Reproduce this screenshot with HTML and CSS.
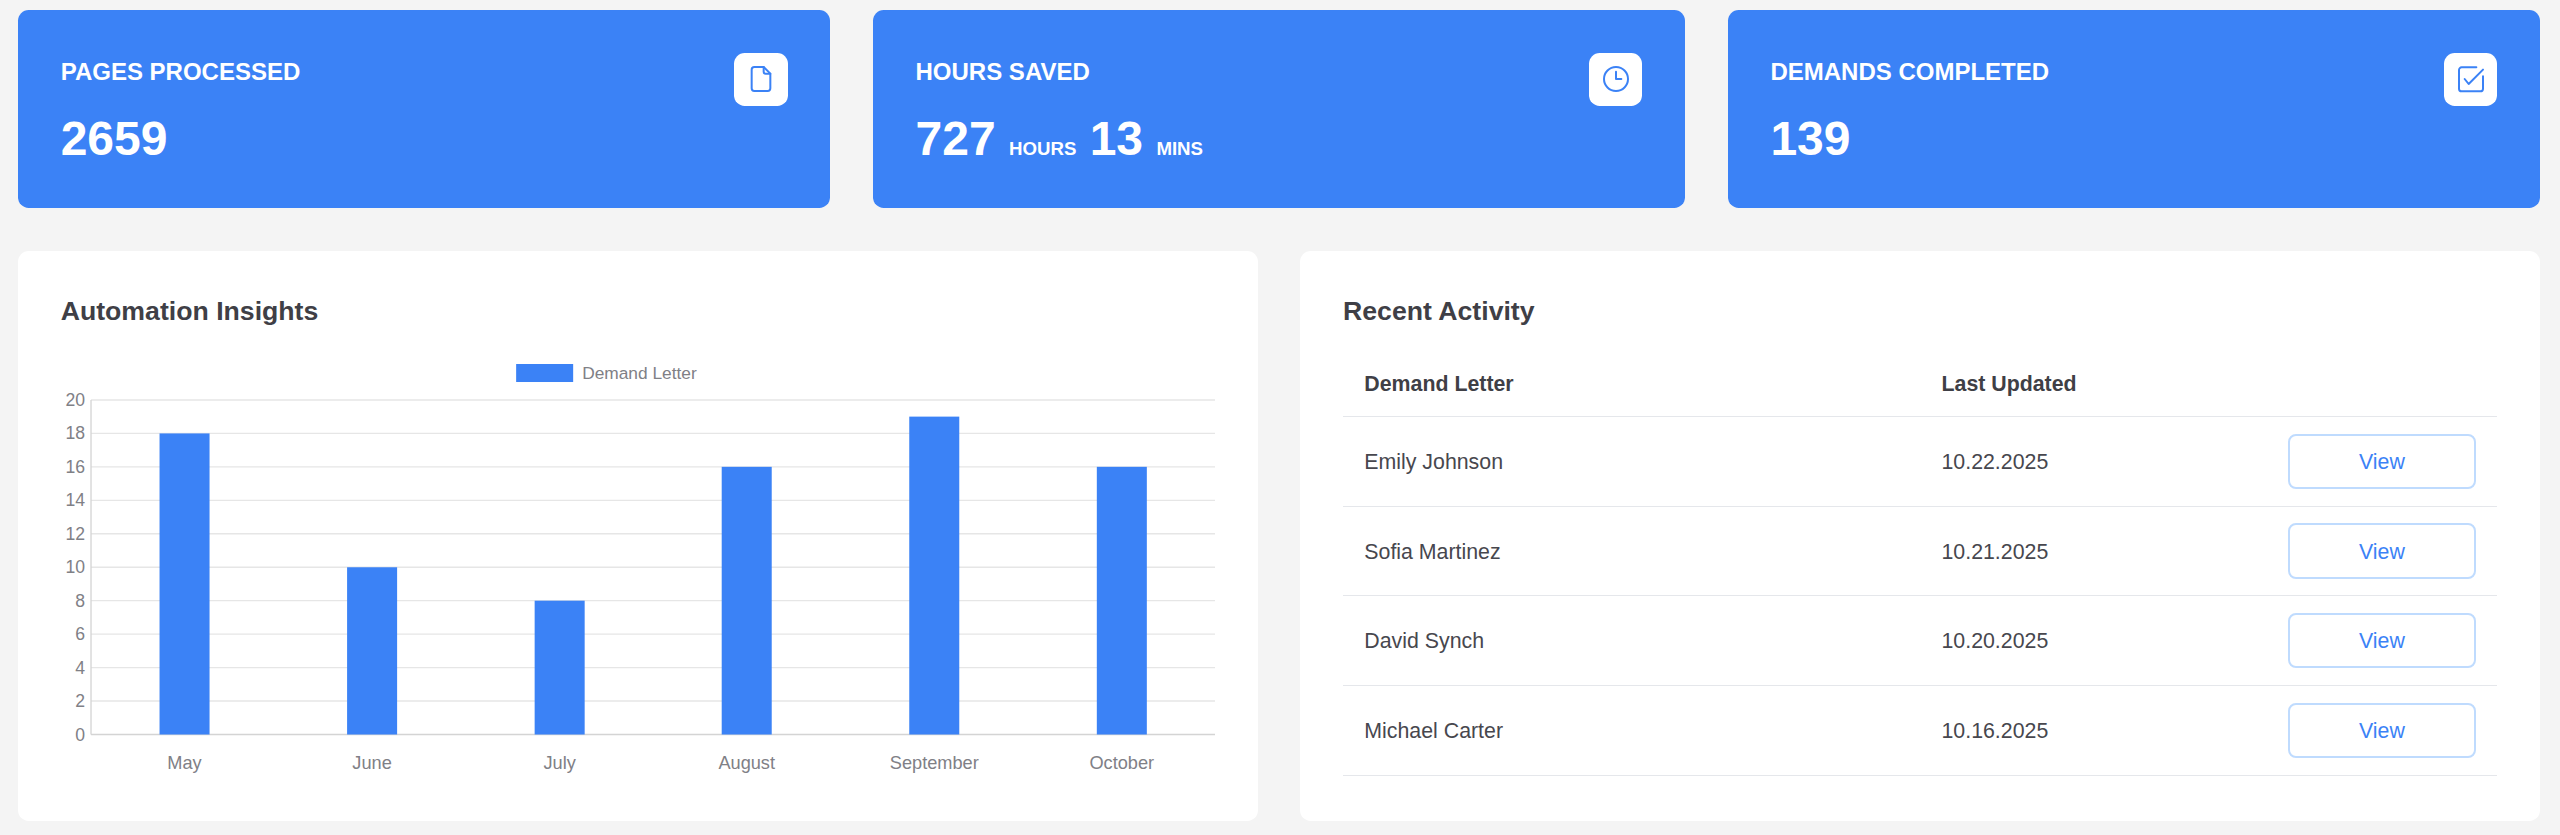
FILE: index.html
```html
<!DOCTYPE html>
<html>
    <head>
        <meta charset="utf-8">
        <title>Dashboard</title>
        <link rel="stylesheet" href="styles.css">
    </head>
    <body>
        <div class="stat-row">
            <div class="stat-card">
                <div>
                    <div class="stat-label">PAGES PROCESSED</div>
                    <div class="stat-value">2659</div>
                </div>
                <span class="stat-icon">
                    <svg viewBox="0 0 24 24"><path d="M7 3h7l5 5v11a2 2 0 0 1-2 2H7a2 2 0 0 1-2-2V5a2 2 0 0 1 2-2z"/><path d="M14 3v3.5A1.5 1.5 0 0 0 15.5 8H19"/></svg>
                </span>
            </div>
            <div class="stat-card">
                <div>
                    <div class="stat-label">HOURS SAVED</div>
                    <div class="stat-value">727<span class="stat-unit">HOURS</span>13<span class="stat-unit">MINS</span></div>
                </div>
                <span class="stat-icon">
                    <svg viewBox="0 0 24 24"><circle cx="12" cy="12" r="9"/><path d="M12 6.5V12h4"/></svg>
                </span>
            </div>
            <div class="stat-card">
                <div>
                    <div class="stat-label">DEMANDS COMPLETED</div>
                    <div class="stat-value">139</div>
                </div>
                <span class="stat-icon">
                    <svg viewBox="0 0 24 24"><path d="M16 3.25H5a2 2 0 0 0-2 2v14a2 2 0 0 0 2 2h14a2 2 0 0 0 2-2V10"/><path d="M7.25 12l3 3.75L21 5"/></svg>
                </span>
            </div>
        </div>
        <div class="panel-row">
            <div class="panel">
                <h2 class="panel-title">Automation Insights</h2>
                <svg class="chart" viewBox="0 0 1154 421">
                    <rect class="bar" x="455" y="7" width="57" height="18"/>
                    <text class="legend" x="521" y="22">Demand Letter</text>

                    <g class="grid">
                        <line x1="30" x2="1154" y1="43" y2="43"/>
                        <line x1="30" x2="1154" y1="76.4" y2="76.4"/>
                        <line x1="30" x2="1154" y1="109.8" y2="109.8"/>
                        <line x1="30" x2="1154" y1="143.3" y2="143.3"/>
                        <line x1="30" x2="1154" y1="176.7" y2="176.7"/>
                        <line x1="30" x2="1154" y1="210.2" y2="210.2"/>
                        <line x1="30" x2="1154" y1="243.6" y2="243.6"/>
                        <line x1="30" x2="1154" y1="277" y2="277"/>
                        <line x1="30" x2="1154" y1="310.5" y2="310.5"/>
                        <line x1="30" x2="1154" y1="343.9" y2="343.9"/>
                    </g>
                    <line class="axis" x1="30" x2="30" y1="43" y2="377.4"/>
                    <line class="axis" x1="30" x2="1154" y1="377.4" y2="377.4"/>

                    <rect class="bar" x="98.5" y="76.4" width="50" height="301"/>
                    <rect class="bar" x="286" y="210.2" width="50" height="167.2"/>
                    <rect class="bar" x="473.5" y="243.6" width="50" height="133.8"/>
                    <rect class="bar" x="660.5" y="109.8" width="50" height="267.6"/>
                    <rect class="bar" x="848" y="59.6" width="50" height="317.8"/>
                    <rect class="bar" x="1035.5" y="109.8" width="50" height="267.6"/>

                    <g class="tick y-ticks">
                        <text x="24" y="49">20</text>
                        <text x="24" y="82.4">18</text>
                        <text x="24" y="115.8">16</text>
                        <text x="24" y="149.3">14</text>
                        <text x="24" y="182.7">12</text>
                        <text x="24" y="216.2">10</text>
                        <text x="24" y="249.6">8</text>
                        <text x="24" y="283">6</text>
                        <text x="24" y="316.5">4</text>
                        <text x="24" y="349.9">2</text>
                        <text x="24" y="383.4">0</text>
                    </g>
                    <g class="tick x-ticks">
                        <text x="123.5" y="411.5">May</text>
                        <text x="311" y="411.5">June</text>
                        <text x="498.5" y="411.5">July</text>
                        <text x="685.5" y="411.5">August</text>
                        <text x="873" y="411.5">September</text>
                        <text x="1060.5" y="411.5">October</text>
                    </g>
                </svg>
            </div>
            <div class="panel">
                <h2 class="panel-title">Recent Activity</h2>
                <table class="activity">
                    <thead>
                        <tr>
                            <th>Demand Letter</th>
                            <th>Last Updated</th>
                            <th></th>
                        </tr>
                    </thead>
                    <tbody>
                        <tr>
                            <td>Emily Johnson</td>
                            <td>10.22.2025</td>
                            <td class="btn-cell"><button class="view-btn">View</button></td>
                        </tr>
                        <tr>
                            <td>Sofia Martinez</td>
                            <td>10.21.2025</td>
                            <td class="btn-cell"><button class="view-btn">View</button></td>
                        </tr>
                        <tr>
                            <td>David Synch</td>
                            <td>10.20.2025</td>
                            <td class="btn-cell"><button class="view-btn">View</button></td>
                        </tr>
                        <tr>
                            <td>Michael Carter</td>
                            <td>10.16.2025</td>
                            <td class="btn-cell"><button class="view-btn">View</button></td>
                        </tr>
                    </tbody>
                </table>
            </div>
        </div>
    </body>
</html>
```

FILE: styles.css
```css
body {
    margin: 0;
    padding: 10px 20px 14px 18px;
    background-color: #f4f4f4;
    color: #3f3f46;
    font-family: "Liberation Sans", Arial, sans-serif;
}
.stat-row {
    display: grid;
    grid-template-columns: repeat(3, 1fr);
    gap: 42.67px;
}
.stat-card {
    display: flex;
    justify-content: space-between;
    align-items: flex-start;
    height: 198px;
    box-sizing: border-box;
    padding: 42.67px;
    background-color: #3b82f6;
    border-radius: 10.67px;
    color: white;
}
.stat-label {
    margin-top: 3.67px;
    font-size: 24px;
    line-height: 32px;
    font-weight: bold;
}
.stat-value {
    margin-top: 24px;
    font-size: 48px;
    line-height: 53.33px;
    font-weight: bold;
}
.stat-unit {
    margin: 0 13.33px;
    font-size: 18.67px;
    font-weight: bold;
}
.stat-icon {
    display: flex;
    align-items: center;
    justify-content: center;
    width: 53.33px;
    height: 53.33px;
    background-color: white;
    border-radius: 10.67px;
}
.stat-icon svg {
    width: 32px;
    height: 32px;
    fill: none;
    stroke: #3b82f6;
    stroke-width: 1.5;
    stroke-linecap: round;
    stroke-linejoin: round;
}
.panel-row {
    display: grid;
    grid-template-columns: 1fr 1fr;
    gap: 42.67px;
    margin-top: 42.67px;
}
.panel {
    height: 570px;
    box-sizing: border-box;
    padding: 42.67px;
    background-color: white;
    border-radius: 10.67px;
}
.panel-title {
    margin: 0 0 31px 0;
    padding-top: 3px;
    font-size: 26.67px;
    line-height: 30px;
    font-weight: bold;
}
.chart {
    display: block;
    width: 100%;
}
.chart .bar {
    fill: #3b82f6;
}
.chart .grid line {
    stroke: #e6e6e6;
    stroke-width: 1.33;
}
.chart .axis {
    stroke: #d4d4d4;
    stroke-width: 1.33;
}
.chart .legend {
    fill: #808086;
    font-size: 17.33px;
}
.chart .tick {
    fill: #808086;
    font-size: 17.6px;
}
.chart .y-ticks {
    text-anchor: end;
}
.chart .x-ticks {
    font-size: 18.2px;
    text-anchor: middle;
}
.activity {
    width: 100%;
    table-layout: fixed;
    border-collapse: collapse;
    font-size: 21.33px;
    color: #47474e;
}
.activity th {
    width: 30%;
    height: 59px;
    box-sizing: border-box;
    padding: 0 21.33px 5px 21.33px;
    text-align: left;
    font-size: 21.33px;
    color: #3f3f46;
    border-bottom: 1.33px solid #e5e7eb;
}
.activity th:first-child {
    width: 50%;
}
.activity th:last-child {
    width: 20%;
}
.activity td {
    height: 89.8px;
    box-sizing: border-box;
    padding: 2px 21.33px 0 21.33px;
    border-bottom: 1.33px solid #e5e7eb;
}
.activity .btn-cell {
    padding-top: 0;
}
.view-btn {
    display: block;
    width: 100%;
    height: 55.33px;
    padding: 2px 0 0 0;
    background-color: white;
    border: 2px solid #bfdbfe;
    border-radius: 8px;
    color: #3b82f6;
    font-family: inherit;
    font-size: 21.33px;
}
```
